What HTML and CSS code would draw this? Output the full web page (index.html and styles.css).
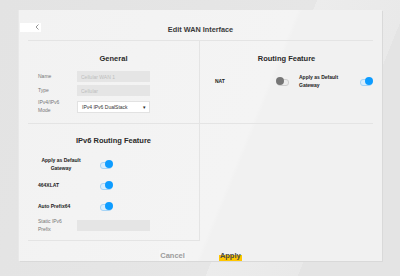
FILE: index.html
```html
<!DOCTYPE html>
<html lang="en">
<head>
  <meta charset="UTF-8" />
  <title>Edit WAN Interface</title>
  <link rel="stylesheet" href="styles.css">
</head>
<body>
  <div class="modal">
    <div class="modal-head">
      <span class="back">
        <svg width="4" height="6" viewBox="0 0 4 6"><path d="M3.5 0.5 L1 3 L3.5 5.5" fill="none" stroke="#666" stroke-width="0.7"/></svg>
      </span>
      <h1>Edit WAN Interface</h1>
    </div>

    <div class="panels">
      <section class="panel general">
        <h2>General</h2>
        <div class="field">
          <label>Name</label>
          <input type="text" value="Cellular WAN 1" disabled />
        </div>
        <div class="field">
          <label>Type</label>
          <input type="text" value="Cellular" disabled />
        </div>
        <div class="field">
          <label>IPv4/IPv6<br>Mode</label>
          <div class="select">IPv4 IPv6 DualStack <span class="caret">&#9662;</span></div>
        </div>
      </section>

      <section class="panel routing">
        <h2>Routing Feature</h2>
        <div class="routing-row">
          <span class="opt nat">NAT</span>
          <span class="toggle"></span>
          <span class="opt gw">Apply as Default<br>Gateway</span>
          <span class="toggle on"></span>
        </div>
      </section>

      <section class="panel ipv6">
        <h2>IPv6 Routing Feature</h2>
        <div class="opt-row">
          <span class="opt centered">Apply as Default<br>Gateway</span>
          <span class="toggle on"></span>
        </div>
        <div class="opt-row">
          <span class="opt">464XLAT</span>
          <span class="toggle on"></span>
        </div>
        <div class="opt-row">
          <span class="opt">Auto Prefix64</span>
          <span class="toggle on"></span>
        </div>
        <div class="field">
          <label>Static IPv6<br>Prefix</label>
          <input type="text" value="" disabled />
        </div>
      </section>

      <section class="panel empty"></section>
    </div>

    <div class="actions">
      <button class="cancel">Cancel</button>
      <button class="apply">Apply</button>
    </div>
  </div>
</body>
</html>
```

FILE: styles.css
```css
* {
  box-sizing: border-box;
  margin: 0;
  padding: 0;
}

body {
  font-family: 'Liberation Sans', Arial, sans-serif;
  background: linear-gradient(112deg, #e3e3e3 0%, #e6e6e6 62%, #ececec 62%, #e9e9e9 80%, #e4e4e4 80%);
  height: 276px;
  overflow: hidden;
  padding: 10px 0 0 19px;
}

.modal {
  position: relative;
  width: 363px;
  height: 251px;
  padding: 0 9px;
  background: linear-gradient(112deg, #f2f2f2 0%, #f4f4f4 60%, #f1f1f1 61%);
  box-shadow: 1px 1px 0 #d9d9d9, -1px 0 0 #e8e8e8;
}

.modal-head {
  height: 31px;
  padding-top: 10px;
  border-bottom: 1px solid #e4e4e4;
  display: flex;
  align-items: center;
  justify-content: center;
}

.modal-head h1 {
  font-size: 7.3px;
  font-weight: bold;
  color: #3a3a3a;
  line-height: 10px;
}

.back {
  position: absolute;
  top: 13px;
  left: 1px;
  width: 21px;
  height: 9px;
  background: #fff;
  display: flex;
  justify-content: flex-end;
  align-items: flex-start;
  padding: 1px 2px 0 0;
}

.back svg {
  display: block;
}

/* panels */
.panels {
  display: grid;
  grid-template-columns: 172px 173px;
  grid-template-rows: 83px 117px;
}

.panel h2 {
  font-size: 7.5px;
  font-weight: bold;
  color: #2a2a2a;
  text-align: center;
  line-height: 10px;
}

.general {
  border-right: 1px solid #e4e4e4;
  border-bottom: 1px solid #e4e4e4;
  padding: 13px 0 0 10px;
}

.general h2 {
  margin-bottom: 7px;
  margin-left: -10px;
}

.routing {
  border-bottom: 1px solid #e4e4e4;
  padding-top: 13px;
}

.ipv6 {
  border-right: 1px solid #e4e4e4;
  border-bottom: 1px solid #e4e4e4;
  padding: 12px 0 0 10px;
}

.ipv6 h2 {
  margin-bottom: 10px;
  margin-left: -10px;
}

.field {
  display: flex;
  align-items: center;
  min-height: 11px;
  margin-bottom: 3px;
}

.field label {
  width: 39px;
  font-size: 5px;
  line-height: 7.5px;
  color: #777;
}

.field input {
  width: 73px;
  height: 11px;
  border: none;
  background: #e5e5e5;
  font-family: inherit;
  font-size: 5px;
  color: #bdbdbd;
  padding: 0 4px;
}

.select {
  width: 73px;
  height: 12px;
  background: #fff;
  border: 1px solid #e2e2e2;
  font-size: 5px;
  color: #333;
  display: flex;
  align-items: center;
  justify-content: space-between;
  padding: 0 3px 0 4px;
}

.caret {
  font-size: 5px;
  color: #222;
}

/* options and toggles */
.opt {
  font-size: 5px;
  font-weight: bold;
  line-height: 8px;
  color: #222;
}

.routing-row {
  display: flex;
  align-items: center;
  margin-top: 9px;
  padding-left: 15px;
}

.nat {
  width: 61px;
}

.gw {
  width: 60px;
  margin-left: 9px;
}

.opt-row {
  display: flex;
  align-items: center;
  height: 16px;
  margin-bottom: 5px;
}

.opt-row .opt {
  width: 61px;
}

.opt-row .centered {
  width: 46px;
  margin-right: 15px;
  text-align: center;
}

.ipv6 .field {
  margin-top: -1px;
}

.toggle {
  position: relative;
  display: inline-block;
  width: 14px;
  height: 8px;
}

.toggle::before {
  content: "";
  position: absolute;
  left: 1px;
  right: 1px;
  top: 1.5px;
  height: 5px;
  border-radius: 3px;
  background: #ececec;
  border: 1px solid #cfcfcf;
}

.toggle::after {
  content: "";
  position: absolute;
  top: 0;
  left: 0;
  width: 8px;
  height: 8px;
  border-radius: 50%;
  background: #767676;
}

.toggle.on::before {
  background: #d9eefc;
  border-color: #a6d4f6;
}

.toggle.on::after {
  left: auto;
  right: 0;
  background: #0d9cff;
}

/* footer buttons */
.actions {
  height: 20px;
  display: flex;
  justify-content: center;
  align-items: flex-end;
  gap: 33px;
}

.actions button {
  border: none;
  font-family: inherit;
  font-size: 7.5px;
  font-weight: bold;
  line-height: 10px;
  height: 11px;
  padding: 0 1px;
}

.cancel {
  background: #f6f6f6;
  color: #9c9c9c;
  padding: 0 2px;
}

.apply {
  color: #4a4a4a;
  background: linear-gradient(to bottom, transparent 42%, #ffc600 42%);
}
```
